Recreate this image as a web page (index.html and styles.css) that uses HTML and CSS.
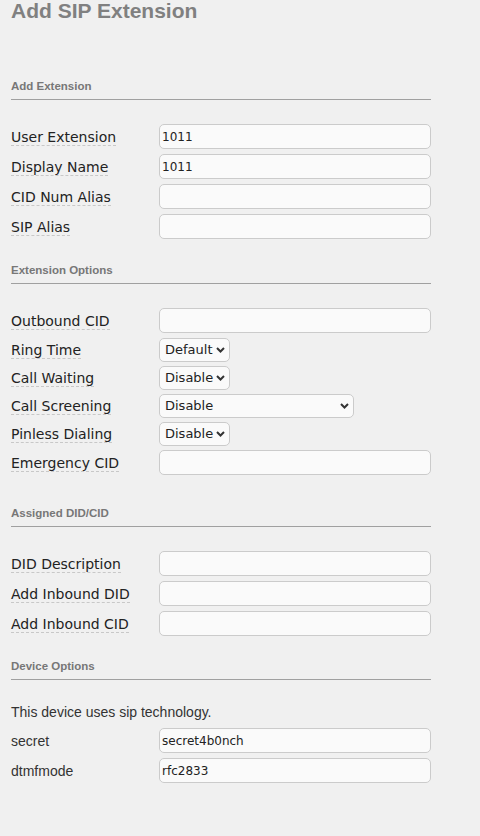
FILE: index.html
```html
<!DOCTYPE html>
<html>
<head>
<meta charset="utf-8">
<link rel="stylesheet" href="styles.css">
</head>
<body>
<div class="page">
  <h1 class="title">Add SIP Extension</h1>

  <h2 class="sec sec-first">Add Extension</h2>
  <div class="rows">
    <div class="row"><div class="lcol"><span class="lbl">User Extension</span></div><input class="inp" type="text" value="1011"></div>
    <div class="row"><div class="lcol"><span class="lbl">Display Name</span></div><input class="inp" type="text" value="1011"></div>
    <div class="row"><div class="lcol"><span class="lbl">CID Num Alias</span></div><input class="inp" type="text" value=""></div>
    <div class="row"><div class="lcol"><span class="lbl">SIP Alias</span></div><input class="inp" type="text" value=""></div>
  </div>

  <h2 class="sec">Extension Options</h2>
  <div class="rows">
    <div class="row"><div class="lcol"><span class="lbl">Outbound CID</span></div><input class="inp" type="text" value=""></div>
    <div class="row row-sel"><div class="lcol"><span class="lbl">Ring Time</span></div>
      <div class="selwrap sel-sm"><select class="sel"><option>Default</option></select><svg class="chev" viewBox="0 0 9 6" width="9" height="6"><path d="M1 1 L4.5 4.5 L8 1" fill="none" stroke="#333" stroke-width="2"/></svg></div></div>
    <div class="row row-sel"><div class="lcol"><span class="lbl">Call Waiting</span></div>
      <div class="selwrap sel-sm"><select class="sel"><option>Disable</option></select><svg class="chev" viewBox="0 0 9 6" width="9" height="6"><path d="M1 1 L4.5 4.5 L8 1" fill="none" stroke="#333" stroke-width="2"/></svg></div></div>
    <div class="row row-sel"><div class="lcol"><span class="lbl">Call Screening</span></div>
      <div class="selwrap sel-lg"><select class="sel"><option>Disable</option></select><svg class="chev" viewBox="0 0 9 6" width="9" height="6"><path d="M1 1 L4.5 4.5 L8 1" fill="none" stroke="#333" stroke-width="2"/></svg></div></div>
    <div class="row row-sel"><div class="lcol"><span class="lbl">Pinless Dialing</span></div>
      <div class="selwrap sel-sm"><select class="sel"><option>Disable</option></select><svg class="chev" viewBox="0 0 9 6" width="9" height="6"><path d="M1 1 L4.5 4.5 L8 1" fill="none" stroke="#333" stroke-width="2"/></svg></div></div>
    <div class="row"><div class="lcol"><span class="lbl">Emergency CID</span></div><input class="inp" type="text" value=""></div>
  </div>

  <h2 class="sec sec-wide">Assigned DID/CID</h2>
  <div class="rows">
    <div class="row"><div class="lcol"><span class="lbl">DID Description</span></div><input class="inp" type="text" value=""></div>
    <div class="row"><div class="lcol"><span class="lbl">Add Inbound DID</span></div><input class="inp" type="text" value=""></div>
    <div class="row"><div class="lcol"><span class="lbl">Add Inbound CID</span></div><input class="inp" type="text" value=""></div>
  </div>

  <h2 class="sec">Device Options</h2>
  <div class="rows">
    <p class="note">This device uses sip technology.</p>
    <div class="row"><div class="lcol"><span class="plain">secret</span></div><input class="inp" type="text" value="secret4b0nch"></div>
    <div class="row"><div class="lcol"><span class="plain">dtmfmode</span></div><input class="inp" type="text" value="rfc2833"></div>
  </div>
</div>
</body>
</html>
```

FILE: styles.css
```css
html, body {
  margin: 0;
  padding: 0;
  background: #f0f0f0;
}

.page {
  width: 420px;
  margin-left: 11px;
}

.title {
  margin: 0;
  height: 21px;
  font: bold 21px/21px "Liberation Sans", Arial, sans-serif;
  color: #808080;
}

.sec {
  margin: 23.5px 0 0 0;
  padding: 0 0 6px 0;
  font: bold 11.5px/14px "Liberation Sans", Arial, sans-serif;
  color: #777;
  border-bottom: 1px solid #a0a0a0;
}

.sec-first {
  margin-top: 58px;
}

.sec-wide {
  margin-top: 31px;
}

.rows {
  padding-top: 24px;
}

.row {
  display: flex;
  align-items: flex-start;
  height: 25px;
  margin-bottom: 5px;
}

.row-sel {
  height: 24px;
  margin-bottom: 4px;
}

.rows .row:last-child {
  margin-bottom: 0;
}

.lcol {
  display: flex;
  align-items: flex-start;
  flex: none;
  width: 148px;
  padding-top: 5px;
}

.row-sel .lcol {
  padding-top: 4px;
}

.lbl {
  font: 14px/16px "DejaVu Sans", Verdana, sans-serif;
  color: #222;
  border-bottom: 1px dashed #c8c8c8;
}

.plain {
  font: 14px/16px "Liberation Sans", Arial, sans-serif;
  color: #333;
}

.inp {
  box-sizing: border-box;
  flex: none;
  width: 272px;
  height: 25px;
  margin: 0;
  padding: 0 2px;
  border: 1px solid #cbcbcb;
  border-radius: 5px;
  background: #fafafa;
  font: 12px "DejaVu Sans", Verdana, sans-serif;
  color: #222;
  outline: none;
}

.selwrap {
  position: relative;
  flex: none;
  height: 24px;
}

.sel-sm { width: 71px; }
.sel-lg { width: 195px; }

.sel {
  -webkit-appearance: none;
  appearance: none;
  box-sizing: border-box;
  width: 100%;
  height: 24px;
  margin: 0;
  padding: 0 0 0 5px;
  border: 1px solid #cbcbcb;
  border-radius: 5px;
  background: #fafafa;
  font: 13px "DejaVu Sans", Verdana, sans-serif;
  color: #222;
  outline: none;
}

.chev {
  position: absolute;
  right: 5px;
  top: 9px;
  pointer-events: none;
}

.note {
  margin: 0 0 8px 0;
  font: 14px/16px "Liberation Sans", Arial, sans-serif;
  color: #333;
}
```
